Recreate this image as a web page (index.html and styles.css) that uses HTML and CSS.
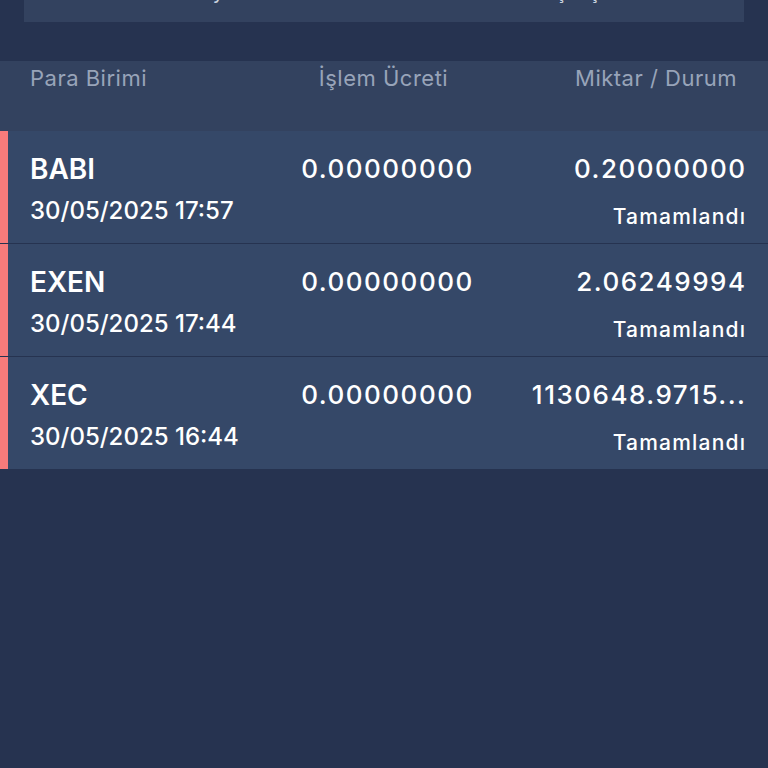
FILE: index.html
```html
<!DOCTYPE html>
<html lang="tr">
<head>
  <meta charset="UTF-8">
  <meta name="viewport" content="width=device-width, initial-scale=1.0">
  <title>İşlem Geçmişi</title>
  <link rel="stylesheet" href="styles.css">
</head>
<body>
  <div class="tabs">
    <div class="tab"><span>Bekleyen</span></div>
    <div class="tab"><span>Geçmiş</span></div>
  </div>

  <div class="table-head">
    <span class="col-left">Para Birimi</span>
    <span class="col-mid">İşlem Ücreti</span>
    <span class="col-right">Miktar / Durum</span>
  </div>

  <div class="list">
    <div class="row">
      <div class="col-left">
        <div class="coin">BABI</div>
        <div class="date">30/05/2025 17:57</div>
      </div>
      <div class="col-mid amount">0.00000000</div>
      <div class="col-right">
        <div class="amount">0.20000000</div>
        <div class="status">Tamamlandı</div>
      </div>
    </div>

    <div class="row">
      <div class="col-left">
        <div class="coin">EXEN</div>
        <div class="date">30/05/2025 17:44</div>
      </div>
      <div class="col-mid amount">0.00000000</div>
      <div class="col-right">
        <div class="amount">2.06249994</div>
        <div class="status">Tamamlandı</div>
      </div>
    </div>

    <div class="row">
      <div class="col-left">
        <div class="coin">XEC</div>
        <div class="date">30/05/2025 16:44</div>
      </div>
      <div class="col-mid amount">0.00000000</div>
      <div class="col-right">
        <div class="amount">1130648.9715...</div>
        <div class="status">Tamamlandı</div>
      </div>
    </div>
  </div>
</body>
</html>
```

FILE: styles.css
```css
body {
  margin: 0;
  background-color: #263350;
  font-family: Inter, "Noto Sans", sans-serif;
  color: #fff;
}

.tabs {
  display: grid;
  grid-template-columns: 1fr 1fr;
  height: 22px;
  margin: 0 24px;
  background-color: #33425f;
  overflow: hidden;
}

.tab {
  text-align: center;
  color: #c9d1de;
}

.tab span {
  display: block;
  margin-top: -18px;
  font-size: 20px;
  line-height: 20px;
}

.table-head {
  display: grid;
  grid-template-columns: 1fr 1fr 1fr;
  height: 70px;
  margin-top: 39px;
  padding: 5px 31px 0 30px;
  box-sizing: border-box;
  background-color: #33425f;
  color: #98a4b9;
  font-size: 22px;
  line-height: 24px;
  letter-spacing: 0.5px;
}

.col-left {
  text-align: left;
}

.col-mid {
  text-align: center;
}

.col-right {
  text-align: right;
}

.row {
  display: grid;
  grid-template-columns: 1fr 1fr 1fr;
  height: 112px;
  margin-bottom: 1px;
  padding: 24px 23px 0 22px;
  box-sizing: border-box;
  border-left: 8px solid #f77b7b;
  background-color: #354868;
}

.coin {
  font-size: 28px;
  font-weight: 600;
  line-height: 28px;
}

.date {
  margin-top: 14px;
  font-size: 24px;
  font-weight: 500;
  line-height: 28px;
}

.amount {
  font-size: 26px;
  font-weight: 500;
  line-height: 28px;
  letter-spacing: 1.5px;
  white-space: nowrap;
}

.col-right .amount {
  margin-right: -1.5px;
}

.status {
  margin-top: 22px;
  font-size: 21px;
  font-weight: 500;
  line-height: 24px;
  letter-spacing: 1.2px;
  margin-right: -1.2px;
}
```
